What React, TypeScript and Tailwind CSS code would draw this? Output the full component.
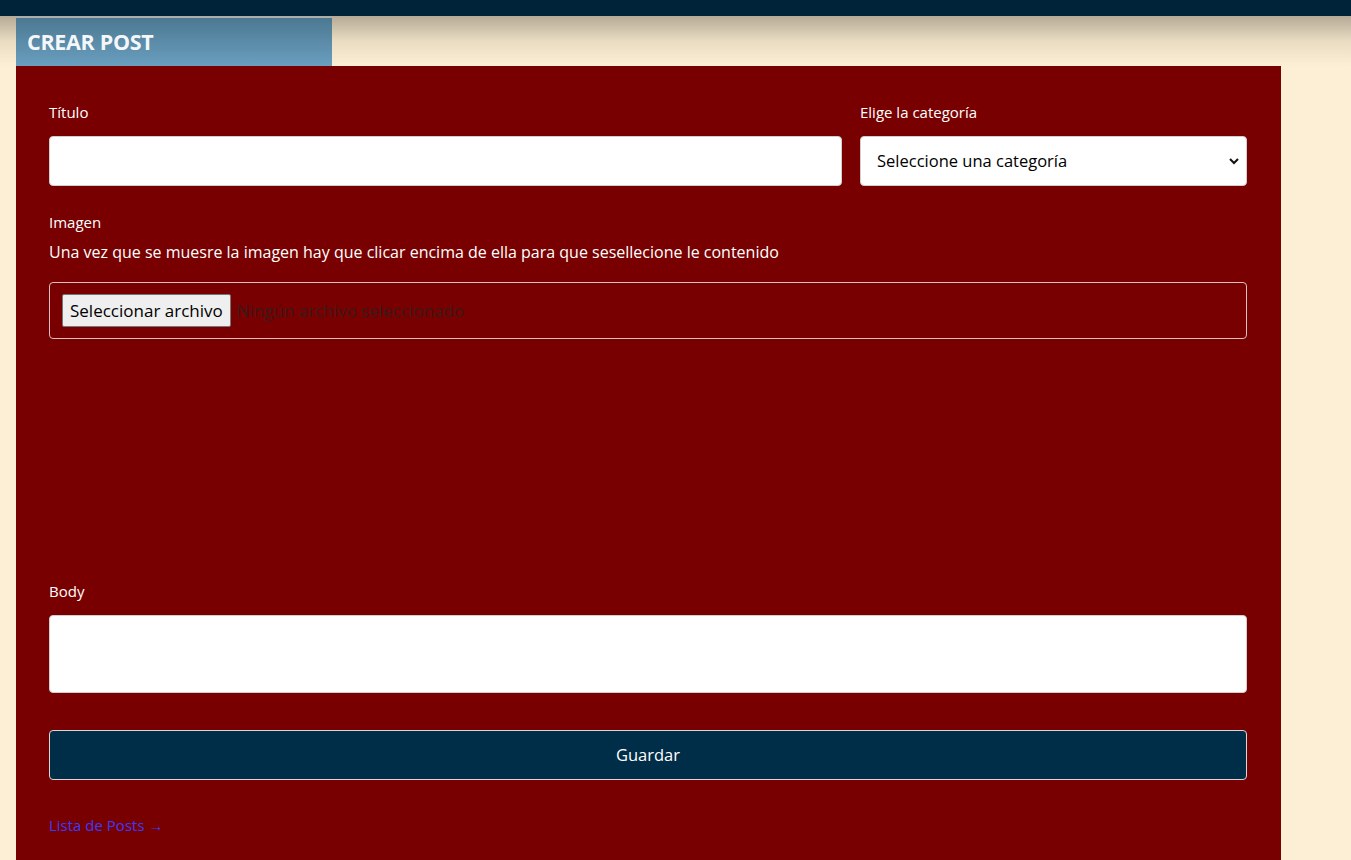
export default function App() {
  return (
    <div className="min-h-screen bg-[#fdefd6] font-['Open_Sans',sans-serif]">
      {/* top bar */}
      <div className="h-4 bg-[#00233a]" />
      <div className="h-[50px] bg-gradient-to-b from-[#b6aa97] via-[#e9dcc2] to-[#fdefd6] -mb-[50px]" />

      <div className="relative pl-4 pr-[70px] pt-[1px]">
        <div className="w-[316px] h-[49px] bg-gradient-to-b from-[#4c7891] to-[#6a9fc0] border-t border-[#9fb3b8] flex items-center px-[11px]">
          <h1 className="text-white/95 font-bold text-[21.5px] tracking-[-0.3px]">CREAR POST</h1>
        </div>

        <div className="bg-[#790000] pl-[33px] pr-[34px] pt-[36px] pb-10">
          <div className="flex gap-[18px]">
            <div className="flex-1">
              <label className="block text-white text-[15px] leading-5">Título</label>
              <input type="text" className="mt-[14px] w-full h-[50px] bg-white rounded border border-[#cfcfcf] px-3 outline-none" />
            </div>
            <div className="w-[387px]">
              <label className="block text-white text-[15px] leading-5">Elige la categoría</label>
              <div className="relative mt-[14px]">
                <select className="appearance-none w-full h-[50px] bg-white rounded border border-[#cfcfcf] pl-4 pr-8 text-[16.5px] text-black outline-none">
                  <option>Seleccione una categoría</option>
                </select>
                <svg className="absolute right-[7px] top-[20px] w-[12px] h-[10px] pointer-events-none" viewBox="0 0 12 10">
                  <path d="M2 3 L6 7 L10 3" fill="none" stroke="#111" strokeWidth="2" />
                </svg>
              </div>
            </div>
          </div>

          <label className="block mt-[26px] text-white text-[15px] leading-5">Imagen</label>
          <p className="mt-[8px] text-white text-[16px] leading-6">
            Una vez que se muesre la imagen hay que clicar encima de ella para que sesellecione le contenido
          </p>
          <div className="mt-[18px] h-[57px] border border-[#d9c0c0] rounded flex items-center px-3">
            <button className="h-[33px] px-[7px] bg-[#efefef] border border-[#767676] rounded-[2px] text-black text-[17px]">
              Seleccionar archivo
            </button>
            <span className="ml-[6px] text-[#3a1a1a] text-[17px]">Ningún archivo seleccionado</span>
          </div>

          <div className="h-[242px]" />

          <label className="block text-white text-[15px] leading-5">Body</label>
          <textarea className="mt-[14px] block w-full h-[78px] bg-white rounded border border-[#cfcfcf] px-3 py-2 outline-none resize-none" />

          <button className="mt-[37px] w-full h-[50px] bg-[#002d47] border border-[#d8d8d8] rounded text-white text-[16.5px]">
            Guardar
          </button>

          <a href="#" className="block mt-[35px] text-[#3a3aff] text-[15px] leading-5">
            Lista de Posts →
          </a>
        </div>
      </div>
    </div>
  );
}
